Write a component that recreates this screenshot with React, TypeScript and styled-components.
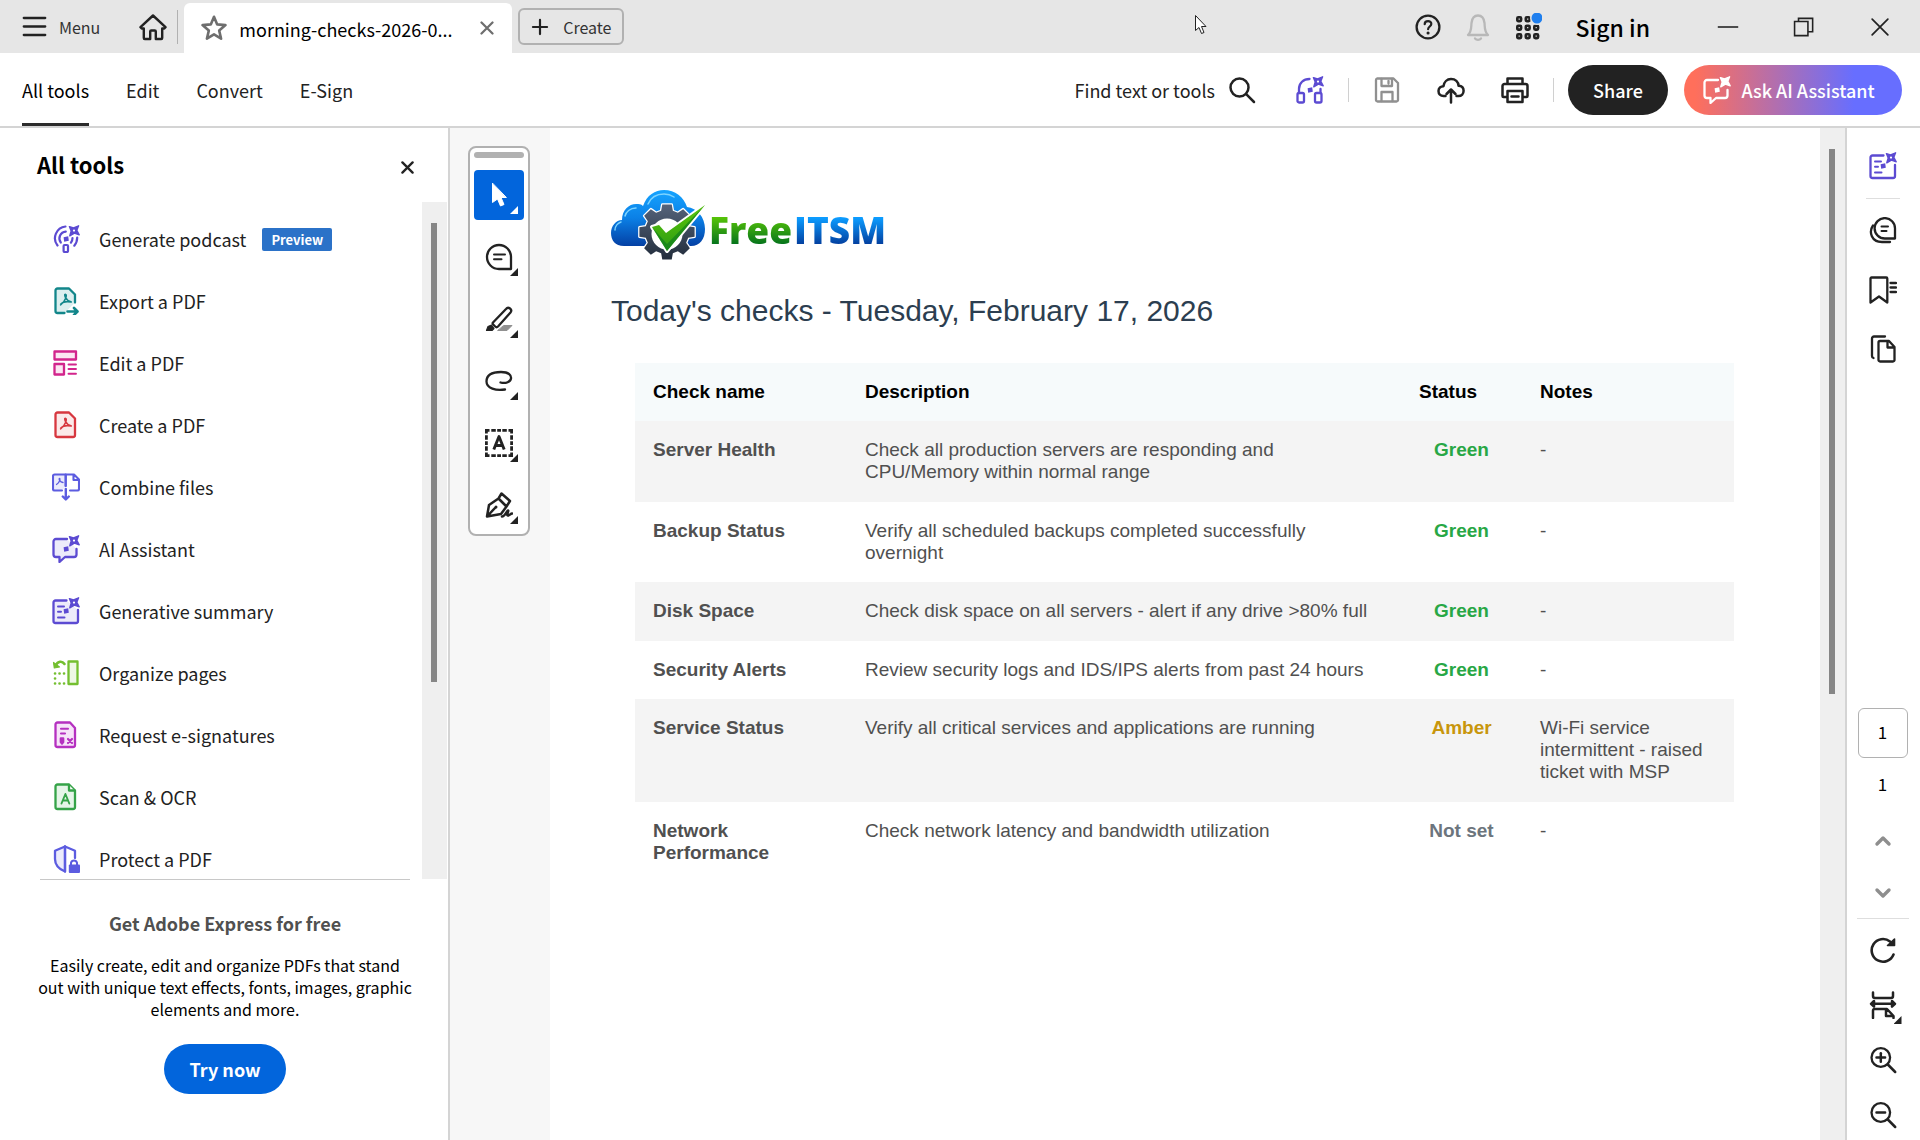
import React from "react";
import styled, { createGlobalStyle } from "styled-components";

const uiFont = `"Noto Sans CJK SC", "Noto Sans", sans-serif`;
const docFont = `"Liberation Sans", Arial, sans-serif`;
const ink = "#222222";
const violet = "#5c4bd2";

const GlobalStyle = createGlobalStyle`
  *, *::before, *::after { box-sizing: border-box; }
  body { margin: 0; font-family: ${uiFont}; color: ${ink}; background: #fff; }
  button, input { font: inherit; color: inherit; }
  button { border: 0; padding: 0; background: none; cursor: default; }
  h1, h2, h3, p, ul { margin: 0; padding: 0; }
  ul { list-style: none; }
  svg { display: block; flex: none; }
`;

/* ---------- icons ---------- */

type GlyphProps = {
  size?: number;
  color?: string;
  weight?: number;
  children: React.ReactNode;
};

const Glyph = ({ size = 28, color = ink, weight = 2.3, children }: GlyphProps) => (
  <svg
    width={size}
    height={size}
    viewBox="0 0 28 28"
    fill="none"
    stroke={color}
    strokeWidth={weight}
    strokeLinecap="round"
    strokeLinejoin="round"
    aria-hidden="true"
  >
    {children}
  </svg>
);

const Sparkle = ({ color = violet }: { color?: string }) => (
  <>
    <path
      d="M17.4 1.6l4.2 1.2 5-2-1.8 4.4 2.4 4.6-4.8-1.6-4.6 2.6 1.4-4.8z"
      fill={color}
      stroke={color}
      strokeWidth="1.4"
    />
    <circle cx="22" cy="5.6" r="1.1" fill="#fff" stroke="none" />
    <path d="M11.6 12.2l4.6-1 .6 4.6-4.6 1z" fill={color} stroke="none" />
  </>
);

const Trefoil = ({ color }: { color: string }) => (
  <path
    d="M13.4 7.2c2 0 .4 7-4.8 10.6M13.4 7.2c-1.8 0 .4 6.6 5.6 7.6M9 16.8c2-2 6-2.6 10.2-1.8"
    stroke={color}
    strokeWidth="1.6"
  />
);

const PodcastIcon = () => (
  <Glyph color={violet} weight={2.2}>
    <path d="M5.5 20.5A11.8 11.8 0 0 1 13.5 1.5M25.2 12.5c0 3.2-1 6-2.9 8.2" />
    <path d="M8.8 17.5a6.8 6.8 0 0 1 5-10.9M20.5 13c0 2-.6 3.5-1.6 4.7" />
    <rect x="11.6" y="20" width="4.4" height="7" rx="1" />
    <Sparkle />
  </Glyph>
);

const ExportIcon = () => (
  <Glyph color="#12868a">
    <path
      d="M12.5 26H5.5a2 2 0 0 1-2-2V3.5a2 2 0 0 1 2-2h11.5l6 6v8"
      fill="#dcefef"
    />
    <Trefoil color="#12868a" />
    <path d="M15.5 24.5h9M22 21l3.5 3.5L22 28" strokeWidth="2.6" />
  </Glyph>
);

const EditIcon = () => (
  <Glyph color="#d2258c">
    <rect x="2.5" y="2.5" width="21.5" height="8" fill="#fbe6f2" />
    <rect x="2.5" y="15" width="9.5" height="10.5" fill="#fbe6f2" />
    <path d="M16.5 15.5h7.5M16.5 20h7.5M16.5 24.8h7.5" strokeWidth="1.9" />
  </Glyph>
);

const CreateIcon = () => (
  <Glyph color="#d7373f">
    <path
      d="M5.5 1.5H17l6 6V24a2 2 0 0 1-2 2H5.5a2 2 0 0 1-2-2V3.5a2 2 0 0 1 2-2z"
      fill="#fbe9e9"
    />
    <Trefoil color="#d7373f" />
  </Glyph>
);

const CombineIcon = () => (
  <Glyph color="#5c5ce0" weight={2.1}>
    <path d="M10 17.5H2.5a1.5 1.5 0 0 1-1.5-1.5V3a1.5 1.5 0 0 1 1.5-1.5h11.2V13" fill="#ebebfb" />
    <path d="M13.7 13V1.5h8.3l5 5V16a1.5 1.5 0 0 1-1.5 1.5H18M21.5 2v5H27" />
    <path d="M7.5 5.5c1 0 .3 3.8-3 6M7.5 5.5c-1 0 .3 3.6 3.5 4" strokeWidth="1.3" />
    <path d="M13.8 16v10M10.8 23.5l3 3 3-3" strokeWidth="2.4" />
  </Glyph>
);

const AssistantIcon = ({ color = violet, fill = "#ecebfa" }: { color?: string; fill?: string }) => (
  <Glyph color={color}>
    <path
      d="M15 4H4a2.5 2.5 0 0 0-2.5 2.5v13A2.5 2.5 0 0 0 4 22h3.5v5l5.5-5h9a2.5 2.5 0 0 0 2.5-2.5V14"
      fill={fill}
    />
    <Sparkle color={color} />
  </Glyph>
);

const SummaryIcon = ({ fill = "none" }: { fill?: string }) => (
  <Glyph color={violet}>
    <path
      d="M14.5 3.5H3.5a2 2 0 0 0-2 2V24a2 2 0 0 0 2 2h20.5a2 2 0 0 0 2-2V13"
      fill={fill}
    />
    <path d="M6 9.5h6M6 14.8h3M6 20.5h6.5" strokeWidth="2" />
    <Sparkle />
  </Glyph>
);

const OrganizeIcon = () => (
  <Glyph color="#74bf30">
    <rect x="16.5" y="2.5" width="9" height="22.5" fill="#eef8e5" />
    <path d="M12.5 5C10 1.5 6 2 3.5 6.5" strokeWidth="2.6" />
    <path d="M1.5 3.5l.8 5.5L7.5 8z" fill="#74bf30" strokeWidth="1.2" />
    <path
      d="M3 14.5h.1M7.5 14.5h.1M12 14.5h.1M3 19.5h.1M3 24.5h.1M7.5 24.5h.1M12 24.5h.1"
      strokeWidth="2.6"
    />
  </Glyph>
);

const RequestIcon = () => (
  <Glyph color="#b531c0">
    <path
      d="M5.5 1.5H18l5 5.5V24a2 2 0 0 1-2 2H5.5a2 2 0 0 1-2-2V3.5a2 2 0 0 1 2-2z"
      fill="#f7e4f9"
    />
    <path d="M9 7.8h7M9 12.5h4" strokeWidth="2.1" />
    <path d="M8.8 17.5h2.4v3.5L10 22.5 8.8 21z" fill="#b531c0" />
    <path d="M16 18l4 4M20 18l-4 4" strokeWidth="2.2" />
  </Glyph>
);

const ScanIcon = () => (
  <Glyph color="#35a348">
    <path
      d="M5.5 1.5H17l6 6V24a2 2 0 0 1-2 2H5.5a2 2 0 0 1-2-2V3.5a2 2 0 0 1 2-2z"
      fill="#e5f5e8"
    />
    <path d="M17 2v5.5h5.5" fill="#fff" />
    <path d="M9.5 20.5l3.9-9.5 3.9 9.5M10.8 17.5h5.2" strokeWidth="1.9" />
  </Glyph>
);

const ProtectIcon = () => (
  <Glyph color="#5c5ce0">
    <path d="M13 1.5L3 5.8V14c0 6.5 5 10.5 10 12.5z" fill="#ebebfb" />
    <path d="M13 1.5l10 4.3V13M13 26.5V1.5" />
    <path d="M19 20v-2.2a3.1 3.1 0 0 1 6 0V20" strokeWidth="2" />
    <rect x="16.8" y="19.5" width="11.2" height="8.5" rx="1" fill="#5c5ce0" stroke="none" />
  </Glyph>
);

const HomeIcon = () => (
  <Glyph weight={2.4}>
    <path d="M14 2.5L1.5 14.2l1.2 1.3h2.1V25a1 1 0 0 0 1 1h5.4v-7.5a1 1 0 0 1 1-1h3.6a1 1 0 0 1 1 1V26h5.4a1 1 0 0 0 1-1v-9.5h2.1l1.2-1.3z" />
  </Glyph>
);

const StarIcon = () => (
  <Glyph color="#6e6e6e" weight={2.6}>
    <path d="M14 2.8l3.2 7.6 8.3.7-6.3 5.5 1.9 8.1L14 20.4l-7.1 4.3 1.9-8.1-6.3-5.5 8.3-.7z" />
  </Glyph>
);

const CrossIcon = ({ size, color = ink, weight = 4 }: { size: number; color?: string; weight?: number }) => (
  <Glyph size={size} color={color} weight={weight}>
    <path d="M3 3l22 22M25 3L3 25" />
  </Glyph>
);

const HelpIcon = () => (
  <Glyph>
    <circle cx="14" cy="14" r="11.4" />
    <path d="M10.7 11.2c0-4.2 6.8-4 6.6-.2-.1 2.4-3.2 2.7-3.2 5.2" strokeWidth="2.2" />
    <path d="M14 20h.1" strokeWidth="3" />
  </Glyph>
);

const BellIcon = () => (
  <Glyph color="#b8b8b8">
    <path d="M4 22c4-4 3-8 3.5-12C8 5.5 10.5 2.5 14 2.5s6 3 6.5 7.5c.5 4-.5 8 3.5 12zM11 25.5c1.5 1.8 4.5 1.8 6 0" />
  </Glyph>
);

const AppsIcon = () => (
  <Glyph weight={2.6}>
    {[5, 13.5, 22].map((y) =>
      [5, 13.5, 22].map((x) => <rect key={`${x}-${y}`} x={x - 1.7} y={y - 0.7} width="3.8" height="3.8" rx="1" />)
    )}
    <circle cx="23" cy="5" r="7" fill="#e6e6e6" stroke="none" />
    <circle cx="23" cy="5" r="5.5" fill="#1f7fee" stroke="none" />
  </Glyph>
);

const SearchIcon = () => (
  <Glyph weight={2.5}>
    <circle cx="11.5" cy="11.5" r="9" />
    <path d="M18.2 18.2l7.8 7.8" />
  </Glyph>
);

const ListenIcon = () => (
  <Glyph color={violet}>
    <path d="M3 17v-4C3 7 7.5 3 13.5 3M24.5 13v4" />
    <rect x="1.5" y="17" width="6.5" height="9.5" rx="1.5" />
    <rect x="19" y="17" width="6.5" height="9.5" rx="1.5" />
    <Sparkle />
  </Glyph>
);

const SaveIcon = () => (
  <Glyph color="#909090">
    <path d="M4 2.5h16.5L25 7v17a1.5 1.5 0 0 1-1.5 1.5h-19A1.5 1.5 0 0 1 3 24V4a1.5 1.5 0 0 1 1-1.5z" />
    <path d="M8.5 3v7h10.5V3M8.5 25v-9h11v9M15.5 5v2.5" />
  </Glyph>
);

const UploadIcon = () => (
  <Glyph weight={2.5}>
    <path d="M8.5 20H6.5C3.5 20 1.5 18 1.5 15s2.3-4.8 5-4.8C7 6 10 3 14 3c4.5 0 7.3 3 7.6 6.8 3 .2 5 2 5 5S24.5 20 21.5 20h-2" />
    <path d="M14 26.5V14M9.5 18l4.5-4.5 4.5 4.5" />
  </Glyph>
);

const PrintIcon = () => (
  <Glyph weight={2.5}>
    <path d="M6.5 8V2.5h15V8M6 21H2.5A1 1 0 0 1 1.5 20V10a2 2 0 0 1 2-2h21a2 2 0 0 1 2 2v10a1 1 0 0 1-1 1H22" />
    <path d="M6.5 15h15v11h-15zM10.5 20.5h7" />
  </Glyph>
);

const SelectIcon = () => (
  <Glyph color="#fff" weight={1}>
    <path d="M7.5 2.5v19l5-3.5 3 7 3.5-1.5-3-7h5z" fill="#fff" />
  </Glyph>
);

const CommentIcon = () => (
  <Glyph>
    <path d="M26 26H14A12 12 0 1 1 26 14z" />
    <path d="M9 11.5h11M9 16.2h7.5" strokeWidth="2" />
  </Glyph>
);

const HighlightIcon = () => (
  <Glyph>
    <path d="M13 25.5h9l5-5h-8z" fill="#909090" stroke="#909090" strokeWidth="1" />
    <path d="M8 17.5L21 4a2.6 2.6 0 0 1 4.5 3.5L13 21.5a2 2 0 0 1-2.8 0l-2-2a1.5 1.5 0 0 1-.2-2z" fill="#fff" />
    <path d="M1.5 25.5l1.5-4 3.5-1.5 2.5 3.5-2 2z" fill={ink} strokeWidth="1.2" />
  </Glyph>
);

const DrawIcon = () => (
  <Glyph>
    <path d="M20 22.5c-9 1.5-18.5-1-18.5-8S8 5 16 5s10.5 3.5 10 6.5-5 5.5-10.5 4" />
  </Glyph>
);

const TextBoxIcon = () => (
  <Glyph weight={2.8}>
    <path
      d="M0 1.4h4.5M6.3 1.4h4.5M12.2 1.4h3.8M17.3 1.4h4.5M23.5 1.4H28M0 26.6h4.5M6.3 26.6h4.5M12.2 26.6h3.8M17.3 26.6h4.5M23.5 26.6H28M1.4 0v4.5M1.4 6.3v4.5M1.4 12.2v3.8M1.4 17.3v4.5M1.4 23.5V28M26.6 0v4.5M26.6 6.3v4.5M26.6 12.2v3.8M26.6 17.3v4.5M26.6 23.5V28"
      strokeLinecap="butt"
    />
    <path d="M8.8 20.5L14 7.5l5.2 13M10.5 16.5h7" strokeWidth="2.9" strokeLinecap="butt" />
  </Glyph>
);

const SignIcon = () => (
  <Glyph weight={2.5}>
    <path d="M2 25.5l2-11.5 9.5-6.5 8 8-5.5 7.5zM2.5 25l7.5-8M13.5 7.5l3-5L25 10l-3.5 5.5" />
    <circle cx="11" cy="16" r="1.5" fill={ink} stroke="none" />
    <path d="M17 25.5c3 0 5-6 6-6s-2 5 0 5 2.5-2 4-2" strokeWidth="2.6" />
  </Glyph>
);

const CommentsIcon = () => (
  <Glyph>
    <path d="M26 21.5H16A10.2 10.2 0 1 1 26 11.5z" />
    <path d="M12.5 9.5h6.5M12.5 14h5" strokeWidth="2" />
    <path d="M4 8.5C-.5 15 2.5 25 13 25h8" />
  </Glyph>
);

const BookmarkIcon = () => (
  <Glyph>
    <path d="M2.5 1.5h14.8a1 1 0 0 1 1 1v24L10 20.5l-8.5 6v-24a1 1 0 0 1 1-1zM21.5 7H27M21.5 11.5H27M21.5 16H27" />
  </Glyph>
);

const PagesIcon = () => (
  <Glyph>
    <path d="M16 1.5H5a2 2 0 0 0-2 2V21a2 2 0 0 0 1.5 2" />
    <path d="M11 6h9l5.5 6v13a1.5 1.5 0 0 1-1.5 1.5H11A1.5 1.5 0 0 1 9.5 25V7.5A1.5 1.5 0 0 1 11 6zM18.5 6.5v6H25" />
  </Glyph>
);

const ChevronIcon = ({ up }: { up?: boolean }) => (
  <Glyph color="#8e8e8e" weight={3.4}>
    <path d={up ? "M8 17l6-6 6 6" : "M8 11l6 6 6-6"} />
  </Glyph>
);

const RotateIcon = () => (
  <Glyph weight={2.6}>
    <path d="M24.5 18.5A11.3 11.3 0 1 1 21 5.5" />
    <path d="M25.5 3v6.5h-7z" fill={ink} strokeWidth="1.6" />
  </Glyph>
);

const FitWidthIcon = () => (
  <Glyph weight={2.5}>
    <path d="M4 1.5V5a2 2 0 0 0 2 2h16a2 2 0 0 0 2-2V1.5M4 27v-7.5a1.5 1.5 0 0 1 1.5-1.5H18l6.5 7v2M17 18.5V25h7" />
    <path d="M3 12.8h22M5 10l-3 2.8 3 2.8zM23 10l3 2.8-3 2.8z" fill={ink} />
  </Glyph>
);

const ZoomIcon = ({ plus }: { plus?: boolean }) => (
  <Glyph>
    <circle cx="11.8" cy="11.5" r="9.3" />
    <path d="M18.8 18.5l7.4 7.5M7.5 11.5h8.6" strokeWidth="2.5" />
    {plus && <path d="M11.8 7.2v8.6" strokeWidth="2.5" />}
  </Glyph>
);

/* ---------- title bar ---------- */

const Shell = styled.div`
  display: flex;
  flex-direction: column;
  height: 100vh;
  overflow: hidden;
`;

const TitleBar = styled.header`
  position: relative;
  display: flex;
  align-items: center;
  height: 53px;
  flex: none;
  background: #e6e6e6;
`;

const MenuButton = styled.button`
  display: flex;
  align-items: center;
  gap: 12px;
  padding-left: 22px;
  font-size: 16px;
  line-height: 24px;
  color: #333;
`;

const HomeButton = styled.button`
  margin: 0 10px 0 39px;
`;

const TabDivider = styled.span`
  width: 1px;
  height: 34px;
  margin-right: 6px;
  background: #b1b1b1;
`;

const FileTab = styled.div`
  display: flex;
  align-items: center;
  align-self: flex-end;
  gap: 11px;
  width: 328px;
  height: 50px;
  padding: 0 18px 0 16px;
  border-radius: 6px 6px 0 0;
  background: #fff;
  color: #000;
  font-size: 18px;
  line-height: 24px;
`;

const FileName = styled.span`
  flex: 1;
  padding-top: 2px;
  white-space: nowrap;
`;

const CreateButton = styled.button`
  display: flex;
  align-items: center;
  justify-content: center;
  gap: 14px;
  width: 106px;
  height: 37px;
  margin-left: 6px;
  border: 2px solid #b1b1b1;
  border-radius: 6px;
  font-size: 16px;
  line-height: 24px;
  color: #333;
`;

const TitleActions = styled.div`
  display: flex;
  align-items: center;
  gap: 22px;
  margin-left: auto;
`;

const SignInButton = styled.button`
  margin: 0 40px 0 12px;
  font-size: 23px;
  font-weight: 500;
  line-height: 30px;
  color: #000;
`;

const WindowButtons = styled.div`
  display: flex;
  padding-right: 2px;
`;

const WindowButton = styled.button`
  display: flex;
  align-items: center;
  justify-content: center;
  width: 76px;
  height: 53px;
`;

const Pointer = styled.svg`
  position: absolute;
  left: 1194px;
  top: 14px;
`;

/* ---------- command bar ---------- */

const CommandBar = styled.div`
  display: flex;
  align-items: center;
  justify-content: space-between;
  height: 75px;
  flex: none;
  padding: 0 18px 0 22px;
  border-bottom: 2px solid #d4d4d4;
  background: #fff;
`;

const ModeTabs = styled.nav`
  display: flex;
  align-self: stretch;
  gap: 37px;
`;

const ModeTab = styled.button<{ $active?: boolean }>`
  padding-top: 3px;
  border-bottom: 3px solid ${(p) => (p.$active ? "#2c2c2c" : "transparent")};
  font-size: 18px;
  line-height: 24px;
  color: ${(p) => (p.$active ? "#000" : ink)};
`;

const Commands = styled.div`
  display: flex;
  align-items: center;
`;

const FindButton = styled.button`
  display: flex;
  align-items: center;
  gap: 13px;
  margin-right: 40px;
  font-size: 18px;
  line-height: 24px;
`;

const IconGroup = styled.div`
  display: flex;
  gap: 36px;
`;

const CommandDivider = styled.span<{ $tight?: boolean }>`
  width: 1px;
  height: 24px;
  margin: 0 ${(p) => (p.$tight ? "14px" : "24px")} 0 24px;
  background: #d0d0d0;
`;

const IconButton = styled.button`
  display: flex;
  align-items: center;
  justify-content: center;
  width: 28px;
  height: 28px;
`;

const Pill = styled.button<{ $fill: string; $width: number; $bold?: boolean }>`
  display: flex;
  align-items: center;
  justify-content: center;
  gap: 10px;
  width: ${(p) => p.$width}px;
  height: 50px;
  border-radius: 25px;
  background: ${(p) => p.$fill};
  color: #fff;
  font-size: 18px;
  font-weight: ${(p) => (p.$bold ? 700 : 500)};
  line-height: 24px;
`;

const AssistantPill = styled(Pill)`
  margin-left: 16px;
  padding-right: 8px;
`;

/* ---------- tools panel ---------- */

const Workspace = styled.div`
  display: flex;
  flex: 1;
  min-height: 0;
`;

const ToolsPanel = styled.aside`
  display: flex;
  flex-direction: column;
  width: 450px;
  flex: none;
  border-right: 2px solid #d4d4d4;
  background: #fff;
`;

const PanelHeader = styled.div`
  display: flex;
  align-items: center;
  justify-content: space-between;
  height: 74px;
  flex: none;
  padding: 0 34px 0 37px;
`;

const PanelTitle = styled.h2`
  padding-bottom: 2px;
  font-size: 22px;
  font-weight: 700;
  line-height: 30px;
  color: #000;
`;

const PanelClose = styled.button`
  padding-top: 5px;
`;

const ToolScroll = styled.div`
  display: flex;
  flex: 1;
  min-height: 0;
  padding-right: 1px;
`;

const ToolList = styled.ul`
  flex: 1;
  padding-top: 6px;
  overflow: hidden;
`;

const ToolButton = styled.button`
  display: flex;
  align-items: center;
  width: 100%;
  height: 62px;
  padding-left: 52px;
  font-size: 18px;
  line-height: 24px;
`;

const ToolLabel = styled.span`
  margin: 0 16px 0 19px;
`;

const PreviewBadge = styled.span`
  padding: 0 9px;
  border-radius: 2px;
  background: #2b72c8;
  color: #fff;
  font-size: 13px;
  font-weight: 700;
  line-height: 23px;
`;

const ScrollTrack = styled.div<{ $inset: number }>`
  display: flex;
  width: 25px;
  flex: none;
  padding: ${(p) => p.$inset}px 0 0 9px;
  background: #efefef;
`;

const ScrollThumb = styled.div<{ $share: string }>`
  width: 6px;
  height: ${(p) => p.$share};
  background: #868686;
`;

const PanelRule = styled.hr`
  height: 1px;
  margin: 0 38px 0 40px;
  border: 0;
  background: #c8c8c8;
`;

const Promo = styled.section`
  display: flex;
  flex-direction: column;
  align-items: center;
  padding: 30px 35px 46px 37px;
  text-align: center;
`;

const PromoTitle = styled.h3`
  font-size: 18px;
  font-weight: 700;
  line-height: 26px;
  color: #505050;
`;

const PromoText = styled.p`
  margin: 18px 0 24px;
  font-size: 16px;
  line-height: 22px;
  color: #000;
`;

/* ---------- document ---------- */

const DocumentArea = styled.main`
  display: flex;
  flex: 1;
  min-width: 0;
  background: #f7f7f7;
`;

const QuickTools = styled.div`
  display: flex;
  flex-direction: column;
  align-items: center;
  align-self: flex-start;
  gap: 12px;
  width: 62px;
  margin: 18px 20px 0 18px;
  padding: 4px 0;
  border: 2px solid #b1b1b1;
  border-radius: 8px;
  background: #fff;
`;

const Grip = styled.span`
  width: 50px;
  height: 6px;
  border-radius: 3px;
  background: #b1b1b1;
`;

const QuickTool = styled.button<{ $active?: boolean }>`
  position: relative;
  display: flex;
  align-items: center;
  justify-content: center;
  width: 50px;
  height: 50px;
  border-radius: 4px;
  background: ${(p) => (p.$active ? "#0265dc" : "transparent")};
  color: ${(p) => (p.$active ? "#fff" : ink)};
`;

const CornerMark = styled.span`
  position: absolute;
  right: 6px;
  bottom: 6px;
  width: 8px;
  height: 8px;
  background: currentColor;
  clip-path: polygon(100% 0, 100% 100%, 0 100%);
`;

const Sheet = styled.article`
  flex: 1;
  min-width: 0;
  padding: 62px 86px 0 61px;
  background: #fff;
  font-family: ${docFont};
`;

const Brand = styled.div`
  display: flex;
  align-items: center;
  height: 72px;
`;

const BrandName = styled.div`
  display: flex;
  gap: 2px;
  padding-top: 8px;
`;

const BrandWord = styled.span<{ $from: string; $to: string }>`
  font-family: "Open Sans", "Noto Sans", sans-serif;
  font-size: 37px;
  font-weight: 800;
  line-height: 40px;
  background: linear-gradient(${(p) => p.$from} 20%, ${(p) => p.$to} 85%);
  background-clip: text;
  -webkit-background-clip: text;
  color: transparent;
`;

const ReportTitle = styled.h1`
  margin: 31px 0 34px;
  font-size: 30px;
  font-weight: 400;
  line-height: 36px;
  color: #2c3e50;
`;

const CheckTable = styled.table`
  width: calc(100% - 24px);
  margin-left: 24px;
  table-layout: fixed;
  border-collapse: collapse;
  font-size: 19px;
  line-height: 22px;
  color: #505050;
`;

const HeadCell = styled.th`
  padding: 18px;
  background: #f6fafb;
  color: #000;
  font-weight: 700;
  text-align: left;
`;

const BodyRow = styled.tr`
  &:nth-child(odd) { background: #f4f4f4; }
  &:nth-child(odd) > * { padding-bottom: 19px; }
`;

const BodyCell = styled.td`
  padding: 18px;
  vertical-align: top;
`;

const NameCell = styled.th`
  padding: 18px;
  font-weight: 700;
  text-align: left;
  vertical-align: top;
`;

const statusColors: Record<string, string> = {
  Green: "#28a745",
  Amber: "#c8960c",
  "Not set": "#6c757d",
};

const StatusCell = styled(BodyCell)<{ $status: string }>`
  font-weight: 700;
  text-align: center;
  white-space: nowrap;
  color: ${(p) => statusColors[p.$status]};
`;

const NameCol = styled.col`width: 212px;`;
const StatusCol = styled.col`width: 121px;`;

/* ---------- right rail ---------- */

const Rail = styled.aside`
  display: flex;
  flex-direction: column;
  align-items: center;
  justify-content: space-between;
  width: 75px;
  flex: none;
  padding: 0 2px 11px 0;
  border-left: 2px solid #d4d4d4;
  background: #fff;
`;

const RailGroup = styled.div<{ $gap: number; $top?: number }>`
  display: flex;
  flex-direction: column;
  align-items: center;
  gap: ${(p) => p.$gap}px;
  padding-top: ${(p) => p.$top ?? 0}px;
`;

const RailDivider = styled.span<{ $wide?: boolean }>`
  width: ${(p) => (p.$wide ? 52 : 34)}px;
  height: 1px;
  margin: ${(p) => (p.$wide ? "11px 0 17px" : "18px 0")};
  background: #dedede;
`;

const PageInput = styled.input`
  width: 50px;
  height: 50px;
  padding: 0 0 4px;
  border: 1px solid #b1b1b1;
  border-radius: 6px;
  background: #fff;
  font-size: 17px;
  text-align: center;
  color: #000;
`;

const PageTotal = styled.span`
  margin: 13px 0 30px;
  font-size: 17px;
  line-height: 26px;
  color: #000;
`;

const FitButton = styled(IconButton)`
  position: relative;
`;

const FitMark = styled(CornerMark)`
  right: -5px;
  bottom: -5px;
`;

/* ---------- data ---------- */

const tools = [
  { label: "Generate podcast", icon: <PodcastIcon />, badge: "Preview" },
  { label: "Export a PDF", icon: <ExportIcon /> },
  { label: "Edit a PDF", icon: <EditIcon /> },
  { label: "Create a PDF", icon: <CreateIcon /> },
  { label: "Combine files", icon: <CombineIcon /> },
  { label: "AI Assistant", icon: <AssistantIcon /> },
  { label: "Generative summary", icon: <SummaryIcon fill="#ecebfa" /> },
  { label: "Organize pages", icon: <OrganizeIcon /> },
  { label: "Request e-signatures", icon: <RequestIcon /> },
  { label: "Scan & OCR", icon: <ScanIcon /> },
  { label: "Protect a PDF", icon: <ProtectIcon /> },
];

const quickTools = [
  { label: "Select", icon: <SelectIcon />, active: true },
  { label: "Comment", icon: <CommentIcon /> },
  { label: "Highlight", icon: <HighlightIcon /> },
  { label: "Draw", icon: <DrawIcon /> },
  { label: "Text box", icon: <TextBoxIcon /> },
  { label: "Sign", icon: <SignIcon /> },
];

const checks = [
  ["Server Health", "Check all production servers are responding and CPU/Memory within normal range", "Green", "-"],
  ["Backup Status", "Verify all scheduled backups completed successfully overnight", "Green", "-"],
  ["Disk Space", "Check disk space on all servers - alert if any drive >80% full", "Green", "-"],
  ["Security Alerts", "Review security logs and IDS/IPS alerts from past 24 hours", "Green", "-"],
  ["Service Status", "Verify all critical services and applications are running", "Amber", "Wi-Fi service intermittent - raised ticket with MSP"],
  ["Network Performance", "Check network latency and bandwidth utilization", "Not set", "-"],
];

/* Eight-toothed gear outline, centred on (cx, cy). */
const gearPath = (cx: number, cy: number, outer: number, inner: number) => {
  const points: string[] = [];
  for (let i = 0; i < 8; i += 1) {
    const base = (i * Math.PI) / 4 - Math.PI / 2;
    [[-0.27, inner], [-0.17, outer], [0.17, outer], [0.27, inner]].forEach(([da, r]) => {
      points.push(`${cx + r * Math.cos(base + da)} ${cy + r * Math.sin(base + da)}`);
    });
  }
  return `M${points.join("L")}Z`;
};

const BrandMark = () => (
  <svg width="98" height="72" viewBox="0 0 98 72" aria-hidden="true">
    <defs>
      <linearGradient id="cloud" x1="0" y1="0" x2="0" y2="1">
        <stop offset="0" stopColor="#16a4ff" />
        <stop offset="0.5" stopColor="#0b80e6" />
        <stop offset="1" stopColor="#0440a4" />
      </linearGradient>
      <linearGradient id="gear" x1="0" y1="0" x2="0" y2="1">
        <stop offset="0" stopColor="#55637a" />
        <stop offset="1" stopColor="#222d3c" />
      </linearGradient>
      <linearGradient id="tick" x1="0" y1="0" x2="0" y2="1">
        <stop offset="0" stopColor="#5cc80a" />
        <stop offset="1" stopColor="#2c9a14" />
      </linearGradient>
    </defs>
    <path
      d="M13 56C4 56 0 50 0 43c0-7 5-13 11-13C11 20 18 14 25 14c3 0 5 0 7 2C36 5 44 0 53 0c11 0 20 7 23 17 10 1 18 10 18 22 0 10-5 17-14 17z"
      fill="url(#cloud)"
    />
    <path d="M37 14c3-7 9-10 16-10 4 0 7 1 10 3M14 26c1-4 5-8 11-8M4 40c0-4 3-7 6-8" fill="none" stroke="#7dd4ff" strokeWidth="1.5" strokeLinecap="round" />
    <path d={gearPath(56, 42, 28, 22)} fill="url(#gear)" stroke="#fff" strokeWidth="2.5" strokeLinejoin="round" paintOrder="stroke" />
    <circle cx="56" cy="44" r="15.5" fill="#fff" />
    <path d="M41 37l7-2 7 8 39-28-38 46z" fill="url(#tick)" stroke="#fff" strokeWidth="4" strokeLinejoin="round" paintOrder="stroke" />
    <path d="M41 37l15 17 38-39-38 46z" fill="#0c7d1d" opacity="0.65" />
  </svg>
);

/* ---------- app ---------- */

export default function App() {
  return (
    <Shell>
      <GlobalStyle />
      <TitleBar>
        <MenuButton>
          <Glyph size={25} weight={2.6}>
            <path d="M2 4.5h24M2 14h24M2 23.5h24" />
          </Glyph>
          Menu
        </MenuButton>
        <HomeButton aria-label="Home"><HomeIcon /></HomeButton>
        <TabDivider />
        <FileTab>
          <StarIcon />
          <FileName>morning-checks-2026-0...</FileName>
          <button aria-label="Close tab"><CrossIcon size={14} color="#6e6e6e" weight={4.5} /></button>
        </FileTab>
        <CreateButton>
          <Glyph size={18} weight={3.4}><path d="M14 3v22M3 14h22" /></Glyph>
          Create
        </CreateButton>
        <TitleActions>
          <IconButton aria-label="Help"><HelpIcon /></IconButton>
          <IconButton aria-label="Notifications"><BellIcon /></IconButton>
          <IconButton aria-label="Apps"><AppsIcon /></IconButton>
          <SignInButton>Sign in</SignInButton>
        </TitleActions>
        <WindowButtons>
          <WindowButton aria-label="Minimize">
            <Glyph size={22} weight={2}><path d="M1 14h26" strokeLinecap="butt" /></Glyph>
          </WindowButton>
          <WindowButton aria-label="Restore">
            <Glyph size={22} weight={2}><path d="M2 7h17v18H2zM7 7V3h18v17h-6" strokeLinejoin="miter" /></Glyph>
          </WindowButton>
          <WindowButton aria-label="Close"><CrossIcon size={20} weight={2.4} /></WindowButton>
        </WindowButtons>
        <Pointer width="14" height="21" viewBox="0 0 14 21" aria-hidden="true">
          <path d="M1.5 1.5v15l3.5-3 2.5 6 2.5-1-2.5-6h4.5z" fill="#fff" stroke="#222" strokeWidth="1" />
        </Pointer>
      </TitleBar>

      <CommandBar>
        <ModeTabs>
          <ModeTab $active>All tools</ModeTab>
          <ModeTab>Edit</ModeTab>
          <ModeTab>Convert</ModeTab>
          <ModeTab>E-Sign</ModeTab>
        </ModeTabs>
        <Commands>
          <FindButton>Find text or tools<SearchIcon /></FindButton>
          <IconButton aria-label="Read aloud"><ListenIcon /></IconButton>
          <CommandDivider />
          <IconGroup>
            <IconButton aria-label="Save"><SaveIcon /></IconButton>
            <IconButton aria-label="Upload"><UploadIcon /></IconButton>
            <IconButton aria-label="Print"><PrintIcon /></IconButton>
          </IconGroup>
          <CommandDivider $tight />
          <Pill $fill="#222" $width={100}>Share</Pill>
          <AssistantPill $fill="linear-gradient(90deg, #ff6f5b 5%, #676eff 78%)" $width={218}>
            <AssistantIcon color="#fff" fill="none" />
            Ask AI Assistant
          </AssistantPill>
        </Commands>
      </CommandBar>

      <Workspace>
        <ToolsPanel>
          <PanelHeader>
            <PanelTitle>All tools</PanelTitle>
            <PanelClose aria-label="Close panel"><CrossIcon size={13} weight={5} /></PanelClose>
          </PanelHeader>
          <ToolScroll>
            <ToolList>
              {tools.map((tool) => (
                <li key={tool.label}>
                  <ToolButton>
                    {tool.icon}
                    <ToolLabel>{tool.label}</ToolLabel>
                    {tool.badge && <PreviewBadge>{tool.badge}</PreviewBadge>}
                  </ToolButton>
                </li>
              ))}
            </ToolList>
            <ScrollTrack $inset={21}><ScrollThumb $share="70%" /></ScrollTrack>
          </ToolScroll>
          <PanelRule />
          <Promo>
            <PromoTitle>Get Adobe Express for free</PromoTitle>
            <PromoText>
              Easily create, edit and organize PDFs that stand out with unique text effects, fonts, images, graphic elements and more.
            </PromoText>
            <Pill $fill="#0265dc" $width={122} $bold>Try now</Pill>
          </Promo>
        </ToolsPanel>

        <DocumentArea>
          <QuickTools>
            <Grip />
            {quickTools.map((tool) => (
              <QuickTool key={tool.label} $active={tool.active} aria-label={tool.label}>
                {tool.icon}
                <CornerMark />
              </QuickTool>
            ))}
          </QuickTools>
          <Sheet>
            <Brand>
              <BrandMark />
              <BrandName>
                <BrandWord $from="#55c208" $to="#06741c">Free</BrandWord>
                <BrandWord $from="#0c9cff" $to="#0340a0">ITSM</BrandWord>
              </BrandName>
            </Brand>
            <ReportTitle>Today's checks - Tuesday, February 17, 2026</ReportTitle>
            <CheckTable>
              <colgroup>
                <NameCol />
                <col />
                <StatusCol />
                <NameCol />
              </colgroup>
              <thead>
                <tr>
                  <HeadCell scope="col">Check name</HeadCell>
                  <HeadCell scope="col">Description</HeadCell>
                  <HeadCell scope="col">Status</HeadCell>
                  <HeadCell scope="col">Notes</HeadCell>
                </tr>
              </thead>
              <tbody>
                {checks.map(([name, description, status, notes]) => (
                  <BodyRow key={name}>
                    <NameCell scope="row">{name}</NameCell>
                    <BodyCell>{description}</BodyCell>
                    <StatusCell $status={status}>{status}</StatusCell>
                    <BodyCell>{notes}</BodyCell>
                  </BodyRow>
                ))}
              </tbody>
            </CheckTable>
          </Sheet>
          <ScrollTrack $inset={21}><ScrollThumb $share="55%" /></ScrollTrack>
        </DocumentArea>

        <Rail>
          <RailGroup $gap={0} $top={24}>
            <IconButton aria-label="Generative summary"><SummaryIcon /></IconButton>
            <RailDivider />
            <RailGroup $gap={31}>
              <IconButton aria-label="Comments"><CommentsIcon /></IconButton>
              <IconButton aria-label="Bookmarks"><BookmarkIcon /></IconButton>
              <IconButton aria-label="Pages"><PagesIcon /></IconButton>
            </RailGroup>
          </RailGroup>
          <RailGroup $gap={0}>
            <PageInput aria-label="Page number" defaultValue="1" />
            <PageTotal>1</PageTotal>
            <RailGroup $gap={24}>
              <IconButton aria-label="Previous page"><ChevronIcon up /></IconButton>
              <IconButton aria-label="Next page"><ChevronIcon /></IconButton>
            </RailGroup>
            <RailDivider $wide />
            <RailGroup $gap={27}>
              <IconButton aria-label="Rotate"><RotateIcon /></IconButton>
              <FitButton aria-label="Fit to width"><FitWidthIcon /><FitMark /></FitButton>
              <IconButton aria-label="Zoom in"><ZoomIcon plus /></IconButton>
              <IconButton aria-label="Zoom out"><ZoomIcon /></IconButton>
            </RailGroup>
          </RailGroup>
        </Rail>
      </Workspace>
    </Shell>
  );
}
